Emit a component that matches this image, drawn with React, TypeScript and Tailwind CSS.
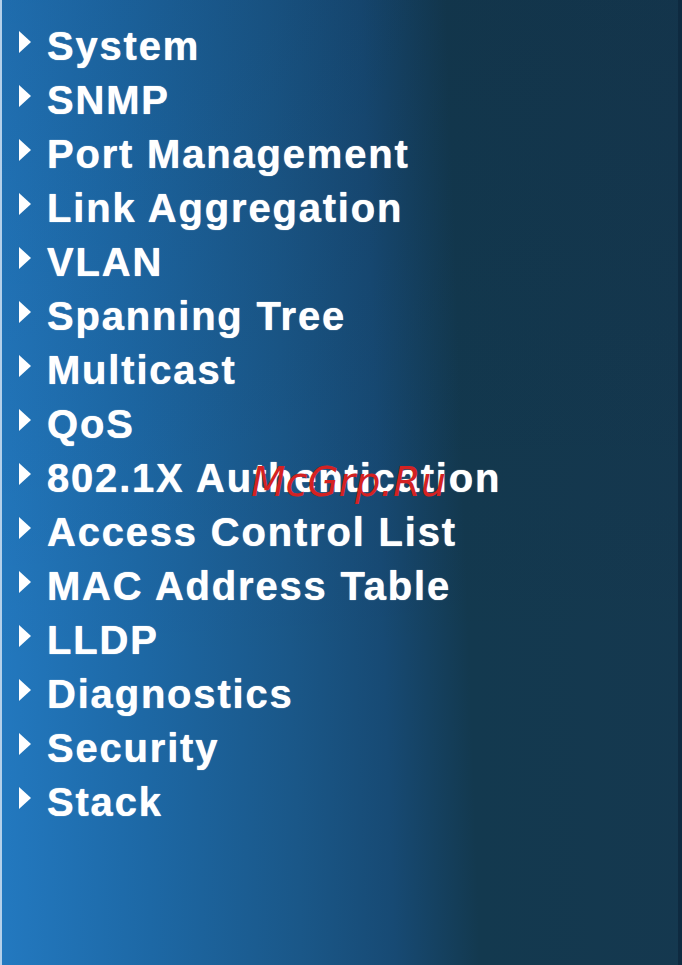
import React from "react";

const items = [
  "System",
  "SNMP",
  "Port Management",
  "Link Aggregation",
  "VLAN",
  "Spanning Tree",
  "Multicast",
  "QoS",
  "802.1X Authentication",
  "Access Control List",
  "MAC Address Table",
  "LLDP",
  "Diagnostics",
  "Security",
  "Stack",
];

function Arrow() {
  return (
    <svg width="14" height="24" viewBox="0 0 14 24" className="shrink-0 -mt-[8px]">
      <polygon points="1,1 13,12 1,23" fill="#ffffff" />
    </svg>
  );
}

export default function App() {
  return (
    <div className="relative w-[682px] h-[965px] overflow-hidden border-l-2 border-[#b4d0ea] bg-[linear-gradient(180deg,rgba(0,10,30,0.08),rgba(0,10,30,0)_70%),linear-gradient(88deg,#2379c0_0%,#1d68a5_21%,#1a5788_42%,#174a74_55%,#13394f_67%,#15384f_100%)]">
      <div className="absolute right-0 top-0 h-full w-[4px] bg-[#0e2a40]" />
      <ul className="flex flex-col pt-[19px] pl-[16px]">
        {items.map((t) => (
          <li key={t} className="flex h-[54px] items-center">
            <Arrow />
            <span
              className="ml-[15px] text-[40px] leading-[54px] font-bold tracking-[1.8px] text-white whitespace-nowrap [text-shadow:0_0_1px_#ffffff]"
              style={{ fontFamily: '"Liberation Sans", Arial, sans-serif' }}
            >
              {t}
            </span>
          </li>
        ))}
      </ul>
      <div
        className="absolute left-[249px] top-[458px] text-[40px] leading-[48px] italic text-[#d42222] whitespace-nowrap"
        style={{ fontFamily: '"DejaVu Sans", sans-serif' }}
      >
        McGrp.Ru
      </div>
    </div>
  );
}
